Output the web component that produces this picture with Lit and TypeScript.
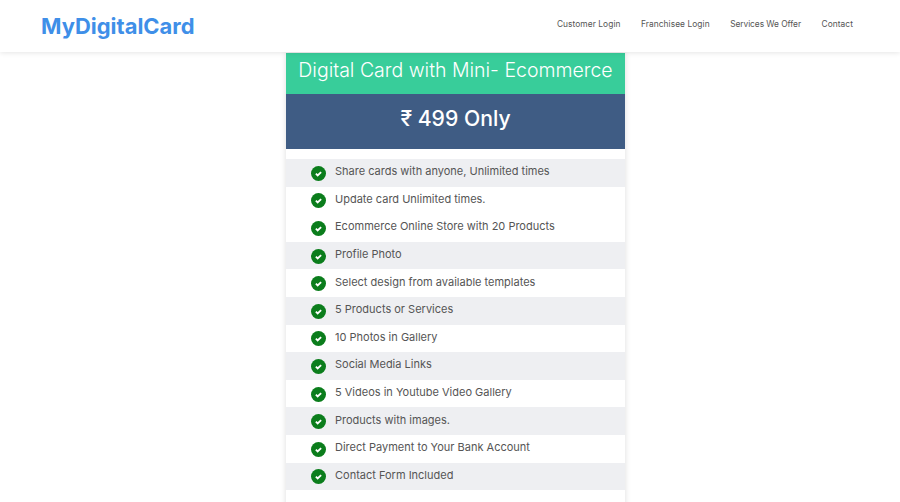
import { LitElement, html, css } from "lit";
import { customElement } from "lit/decorators.js";

const FEATURES = [
  "Share cards with anyone, Unlimited times",
  "Update card Unlimited times.",
  "Ecommerce Online Store with 20 Products",
  "Profile Photo",
  "Select design from available templates",
  "5 Products or Services",
  "10 Photos in Gallery",
  "Social Media Links",
  "5 Videos in Youtube Video Gallery",
  "Products with images.",
  "Direct Payment to Your Bank Account",
  "Contact Form Included",
];
const NAV = ["Customer Login", "Franchisee Login", "Services We Offer", "Contact"];

@customElement("app-root")
export class AppRoot extends LitElement {
  static styles = css`
    :host {
      display: block;
      width: 900px;
      height: 502px;
      overflow: hidden;
      background: #fff;
      font-family: Inter, "Liberation Sans", sans-serif;
      color: #444;
    }
    header {
      position: relative;
      z-index: 2;
      height: 52px;
      display: flex;
      align-items: center;
      justify-content: space-between;
      padding: 0 47px 4px 41px;
      box-sizing: border-box;
      background: #fff;
      box-shadow: 0 1px 5px rgba(0, 0, 0, 0.1);
    }
    .logo {
      font-size: 21.95px;
      font-weight: 700;
      color: #3f8fe8;
      padding-top: 3px;
    }
    nav {
      display: flex;
      gap: 20.5px;
      font-size: 8.4px;
      letter-spacing: 0.06px;
      color: #555;
    }
    nav a:nth-child(3) {
      letter-spacing: -0.06px;
    }
    .card {
      width: 339px;
      margin: 1px 0 0 286px;
      background: #fff;
      box-shadow: 0 0 6px rgba(0, 0, 0, 0.14);
    }
    .title {
      height: 41px;
      display: flex;
      align-items: center;
      justify-content: center;
      background: #38cd9a;
      color: #fff;
      font-size: 19.5px;
      font-weight: 300;
      white-space: nowrap;
      padding-bottom: 8px;
      box-sizing: border-box;
    }
    .price {
      height: 55px;
      display: flex;
      align-items: center;
      justify-content: center;
      background: #3f5c84;
      color: #fff;
      font-size: 21.2px;
      font-weight: 500;
      padding-bottom: 8px;
      box-sizing: border-box;
    }
    ul {
      list-style: none;
      margin: 0;
      padding: 10px 0 40px;
    }
    li {
      height: 27.6px;
      display: flex;
      align-items: center;
      gap: 9px;
      padding-left: 25px;
      font-size: 11px;
      color: #555;
    }
    li.alt {
      background: #eeeff2;
    }
    li span {
      padding-bottom: 3px;
    }
    svg {
      width: 15px;
      height: 15px;
      flex: none;
      margin-top: 1px;
    }
  `;

  render() {
    return html`
      <header>
        <div class="logo">MyDigitalCard</div>
        <nav>${NAV.map((n) => html`<a>${n}</a>`)}</nav>
      </header>
      <section class="card">
        <div class="title">Digital Card with Mini- Ecommerce</div>
        <div class="price">₹ 499 Only</div>
        <ul>
          ${FEATURES.map(
            (f, i) => html`<li class=${i === 0 || (i > 1 && i % 2 === 1) ? "alt" : ""}>
              <svg viewBox="0 0 16 16">
                <circle cx="8" cy="8" r="8" fill="#0b7d1c"></circle>
                <path d="M5.2 8.2l1.9 1.9L10.8 6.6" fill="none" stroke="#fff" stroke-width="2"></path>
              </svg>
              <span>${f}</span>
            </li>`
          )}
        </ul>
      </section>
    `;
  }
}
